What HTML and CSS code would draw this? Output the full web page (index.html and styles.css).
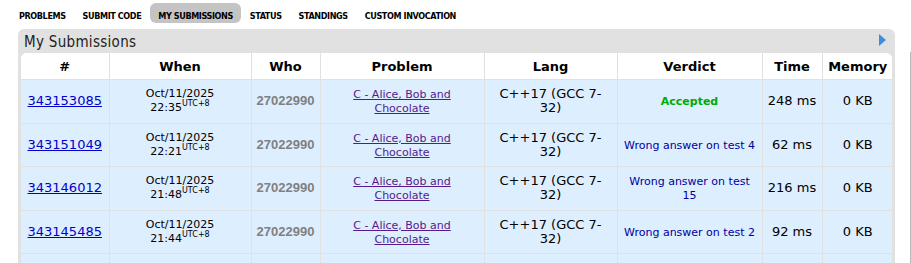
FILE: index.html
```html
<!DOCTYPE html>
<html lang="en">
<head>
  <meta charset="UTF-8">
  <title>My Submissions</title>
  <link rel="stylesheet" href="styles.css">
</head>
<body>
  <div class="page">
    <div class="main">
      <!-- second level menu -->
      <ul class="menu">
        <li><a href="#">PROBLEMS</a></li>
        <li><a href="#">SUBMIT CODE</a></li>
        <li class="current"><a href="#">MY SUBMISSIONS</a></li>
        <li><a href="#">STATUS</a></li>
        <li><a href="#">STANDINGS</a></li>
        <li><a href="#">CUSTOM INVOCATION</a></li>
      </ul>

      <div class="roundbox">
        <div class="caption">
          <span>My Submissions</span>
          <span class="arrow"></span>
        </div>
        <div class="table-wrap">
          <table class="status-frame">
            <colgroup>
              <col style="width: 88px">
              <col style="width: 142px">
              <col style="width: 69px">
              <col style="width: 164px">
              <col style="width: 133px">
              <col style="width: 145px">
              <col style="width: 60px">
              <col style="width: 71px">
            </colgroup>
            <thead>
              <tr>
                <th>#</th>
                <th>When</th>
                <th>Who</th>
                <th>Problem</th>
                <th>Lang</th>
                <th>Verdict</th>
                <th>Time</th>
                <th>Memory</th>
              </tr>
            </thead>
            <tbody>
              <tr>
                <td><a class="sub-id" href="#">343153085</a></td>
                <td class="when">Oct/11/2025<br>22:35<sup>UTC+8</sup></td>
                <td><a class="user" href="#">27022990</a></td>
                <td><a class="problem" href="#">C - Alice, Bob and<br>Chocolate</a></td>
                <td class="lang">C++17 (GCC 7-<br>32)</td>
                <td><span class="accepted">Accepted</span></td>
                <td class="num">248 ms</td>
                <td class="num">0 KB</td>
              </tr>
              <tr>
                <td><a class="sub-id" href="#">343151049</a></td>
                <td class="when">Oct/11/2025<br>22:21<sup>UTC+8</sup></td>
                <td><a class="user" href="#">27022990</a></td>
                <td><a class="problem" href="#">C - Alice, Bob and<br>Chocolate</a></td>
                <td class="lang">C++17 (GCC 7-<br>32)</td>
                <td><span class="wrong">Wrong answer on test 4</span></td>
                <td class="num">62 ms</td>
                <td class="num">0 KB</td>
              </tr>
              <tr>
                <td><a class="sub-id" href="#">343146012</a></td>
                <td class="when">Oct/11/2025<br>21:48<sup>UTC+8</sup></td>
                <td><a class="user" href="#">27022990</a></td>
                <td><a class="problem" href="#">C - Alice, Bob and<br>Chocolate</a></td>
                <td class="lang">C++17 (GCC 7-<br>32)</td>
                <td><span class="wrong">Wrong answer on test<br>15</span></td>
                <td class="num">216 ms</td>
                <td class="num">0 KB</td>
              </tr>
              <tr>
                <td><a class="sub-id" href="#">343145485</a></td>
                <td class="when">Oct/11/2025<br>21:44<sup>UTC+8</sup></td>
                <td><a class="user" href="#">27022990</a></td>
                <td><a class="problem" href="#">C - Alice, Bob and<br>Chocolate</a></td>
                <td class="lang">C++17 (GCC 7-<br>32)</td>
                <td><span class="wrong">Wrong answer on test 2</span></td>
                <td class="num">92 ms</td>
                <td class="num">0 KB</td>
              </tr>
              <tr class="next-row">
                <td></td><td></td><td></td><td></td><td></td><td></td><td></td><td></td>
              </tr>
            </tbody>
          </table>
        </div>
      </div>
    </div>
    <div class="sidebar"></div>
  </div>
</body>
</html>
```

FILE: styles.css
```css
/* Global */
body {
  margin: 0;
  background: #ffffff;
  font-family: "DejaVu Sans", Verdana, sans-serif;
  color: #000;
  overflow: hidden;
}

.page {
  display: flex;
  gap: 15px;
}

.main {
  width: 895px;
  flex-shrink: 0;
}

.sidebar {
  margin-top: 52px;
  height: 220px;
  border-left: 1px solid #b9b9b9;
  flex: 1;
}

/* Second level menu */
.menu {
  list-style: none;
  margin: 0;
  padding: 3px 0 0 11px;
  display: flex;
}

.menu li {
  height: 20px;
  line-height: 21px;
  padding: 0 8px;
  border-radius: 6px;
  margin-right: 1px;
}

.menu li a {
  font-family: "DejaVu Sans", sans-serif;
  font-stretch: condensed;
  font-weight: bold;
  font-size: 9px;
  letter-spacing: -0.4px;
  color: #000;
  text-decoration: none;
}

.menu li.current {
  background-color: #c4c4c4;
}

/* Box */
.roundbox {
  margin: 6px 0 0 18px;
  background-color: #e1e1e1;
  border-radius: 6px 6px 0 0;
  padding: 0 3px;
}

.caption {
  height: 24px;
  box-sizing: border-box;
  padding: 2px 6px 0 3px;
  display: flex;
  justify-content: space-between;
  align-items: center;
  font-size: 15px;
  font-stretch: condensed;
  letter-spacing: 0.3px;
  color: #222;
}

.arrow {
  width: 0;
  height: 0;
  border-top: 6px solid transparent;
  border-bottom: 6px solid transparent;
  border-left: 7px solid #3d8fdc;
  margin-bottom: 4px;
}

.table-wrap {
  background: #fff;
  border-radius: 6px 6px 0 0;
  overflow: hidden;
}

/* Status table */
table {
  width: 872px;
  table-layout: fixed;
  border-collapse: collapse;
}

th, td {
  text-align: center;
  border: 1px solid #e1e1e1;
  padding: 0 3px;
}

tr:first-child th { border-top: none; }
th:first-child, td:first-child { border-left: none; }
th:last-child, td:last-child { border-right: none; }

th {
  height: 26px;
  font-size: 13px;
  font-weight: bold;
  background: #fff;
}

td {
  height: 42.5px;
  background-color: #ddeeff;
  font-size: 13px;
  line-height: 14px;
}

.sub-id {
  color: #0000cc;
}

.when {
  font-size: 11px;
  line-height: 14px;
}

.when sup {
  font-size: 8px;
  line-height: 0;
}

.user {
  font-family: "Liberation Sans", Arial, sans-serif;
  font-weight: bold;
  color: #808080;
  text-decoration: none;
  font-size: 13px;
}

.problem {
  font-size: 11px;
  line-height: 13px;
  color: #551a8b;
}

.lang {
  line-height: 14px;
}

.accepted {
  color: #00aa00;
  font-weight: bold;
  font-size: 11px;
}

.wrong {
  color: #0000a0;
  font-size: 11px;
  line-height: 13px;
}
```
